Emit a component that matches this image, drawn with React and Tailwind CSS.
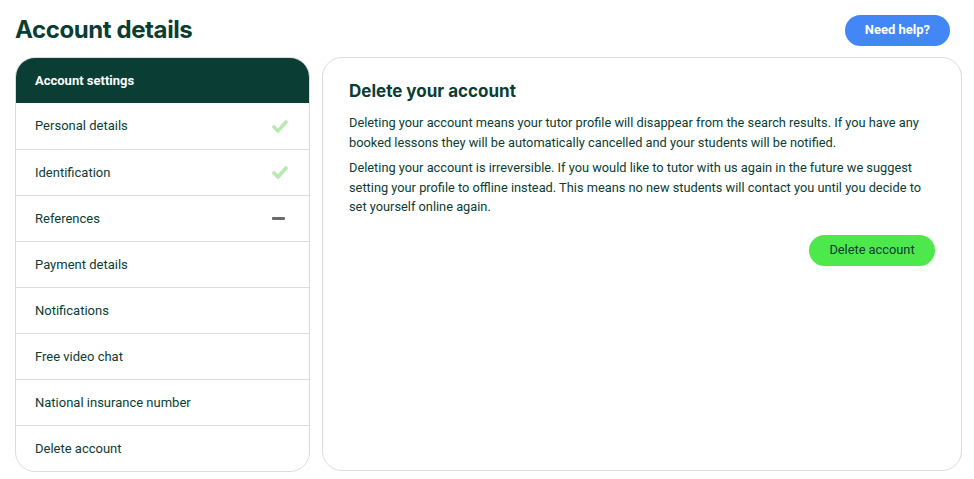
const items = [
  { label: "Personal details", status: "done" },
  { label: "Identification", status: "done" },
  { label: "References", status: "pending" },
  { label: "Payment details" },
  { label: "Notifications" },
  { label: "Free video chat" },
  { label: "National insurance number" },
  { label: "Delete account" },
];

function Tick() {
  return (
    <svg width="16" height="13" viewBox="0 0 16 13" className="mr-[2px]">
      <polyline points="2,7 6,11 14,2" fill="none" stroke="#b7e9b1" strokeWidth="3.6" strokeLinecap="round" strokeLinejoin="round" />
    </svg>
  );
}

export default function App() {
  return (
    <div className="min-h-screen bg-white pl-[15px] pr-[12px] pt-[14px] text-[#0b3d33]" style={{ fontFamily: "Roboto, sans-serif" }}>
      <div className="flex items-center justify-between pr-[12px]">
        <h1 className="text-[24px] leading-[32px] font-bold tracking-[-0.4px] text-[#0b3d33]" style={{ fontFamily: "Inter, sans-serif" }}>
          Account details
        </h1>
        <button className="h-[31px] rounded-full bg-[#4287f5] px-[20px] text-[13px] font-bold text-white">
          Need help?
        </button>
      </div>

      <div className="mt-[11px] flex gap-[12px]">
        <div className="w-[295px] shrink-0 overflow-hidden rounded-[20px] border border-[#dcdcdc]">
          <div className="flex h-[45px] items-center bg-[#0a3d34] px-[19px] text-[13px] font-bold text-white">
            Account settings
          </div>
          {items.map((item, i) => (
            <div
              key={item.label}
              className={`flex h-[46px] items-center justify-between px-[19px] text-[13px] text-[#0b3d33] ${i > 0 ? "border-t border-[#dcdcdc]" : ""}`}
            >
              <span>{item.label}</span>
              {item.status === "done" && <Tick />}
              {item.status === "pending" && <span className="mr-[5px] h-[3px] w-[13px] rounded-[1px] bg-[#6b6b6b]" />}
            </div>
          ))}
        </div>

        <div className="h-[414px] flex-1 rounded-[20px] border border-[#dcdcdc] px-[26px] pt-[20px]">
          <h2 className="text-[17px] font-bold leading-[26px] text-[#0b3d33]" style={{ fontFamily: "Inter, sans-serif" }}>
            Delete your account
          </h2>
          <p className="mt-[9px] text-[12.8px] leading-[19.5px]">
            Deleting your account means your tutor profile will disappear from the search results. If you have any booked lessons they will be automatically cancelled and your students will be notified.
          </p>
          <p className="mt-[6px] text-[12.8px] leading-[19.5px]">
            Deleting your account is irreversible. If you would like to tutor with us again in the future we suggest setting your profile to offline instead. This means no new students will contact you until you decide to set yourself online again.
          </p>
          <div className="mt-[18px] flex justify-end">
            <button className="h-[31px] w-[126px] rounded-full bg-[#4de84b] text-[12.8px] text-[#0b3d33]">
              Delete account
            </button>
          </div>
        </div>
      </div>
    </div>
  );
}
